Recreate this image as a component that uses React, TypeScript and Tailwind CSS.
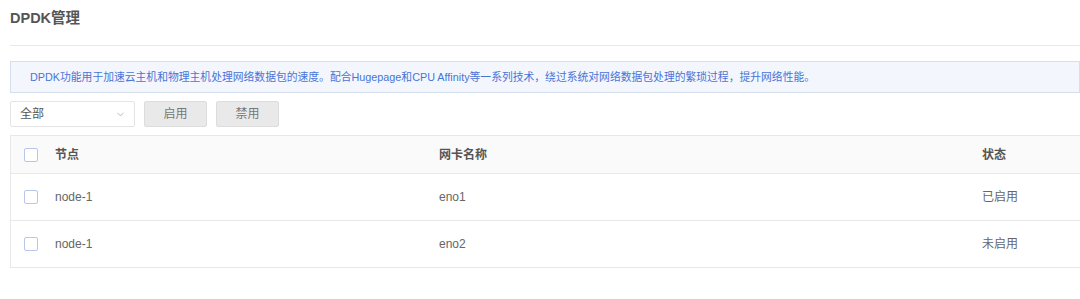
import { ChevronDown } from 'lucide-react';

const rows = [
  { node: 'node-1', nic: 'eno1', status: '已启用' },
  { node: 'node-1', nic: 'eno2', status: '未启用' },
];

function Checkbox() {
  return <span className="block w-[14px] h-[14px] border border-[#b9c6e8] rounded-[2px] bg-white" />;
}

export default function App() {
  return (
    <div className="w-[1080px] h-[299px] bg-white overflow-hidden font-['Liberation_Sans','Noto_Sans_CJK_SC',sans-serif] text-[12px] text-[#666]">
      {/* Title */}
      <div className="pl-[10px] pt-[8px] h-[45px] text-[14.5px] font-bold text-[#555] leading-[20px]">DPDK管理</div>
      <div className="ml-[10px] h-px bg-[#e8e8e8]" />

      {/* Info */}
      <div className="ml-[10px] mt-[15px] h-[32px] flex items-center pl-[19px] bg-[#f3f7fd] border border-[#d6dfec] text-[10.8px] text-[#4a73d6]">
        DPDK功能用于加速云主机和物理主机处理网络数据包的速度。配合Hugepage和CPU Affinity等一系列技术，绕过系统对网络数据包处理的繁琐过程，提升网络性能。
      </div>

      {/* Toolbar */}
      <div className="ml-[10px] mt-[8px] flex items-center gap-[9px] h-[26px]">
        <div className="w-[125px] h-[26px] border border-[#e4e4e4] rounded-[2px] flex items-center justify-between pl-[9px] pr-[8px] text-[#555]">
          <span>全部</span>
          <ChevronDown className="w-[11px] h-[11px] text-[#999]" strokeWidth={1.5} />
        </div>
        <button className="w-[63px] h-[26px] bg-[#e9e9e9] border border-[#dcdcdc] rounded-[2px] text-[#777] text-[12px]">启用</button>
        <button className="w-[63px] h-[26px] bg-[#e9e9e9] border border-[#dcdcdc] rounded-[2px] text-[#777] text-[12px]">禁用</button>
      </div>

      {/* Table */}
      <div className="ml-[10px] mt-[8px] border-l border-t border-[#e8e8e8]">
        <div className="grid grid-cols-[428px_543px_1fr] h-[38px] bg-[#fafafa] border-b border-[#e8e8e8] items-center font-bold text-[#555]">
          <div className="flex items-center gap-[17px] pl-[13px]">
            <Checkbox />
            <span>节点</span>
          </div>
          <div>网卡名称</div>
          <div>状态</div>
        </div>
        {rows.map((r) => (
          <div key={r.nic} className="grid grid-cols-[428px_543px_1fr] h-[47px] border-b border-[#e8e8e8] items-center text-[#666]">
            <div className="flex items-center gap-[17px] pl-[13px]">
              <Checkbox />
              <span>{r.node}</span>
            </div>
            <div>{r.nic}</div>
            <div>{r.status}</div>
          </div>
        ))}
      </div>
    </div>
  );
}
